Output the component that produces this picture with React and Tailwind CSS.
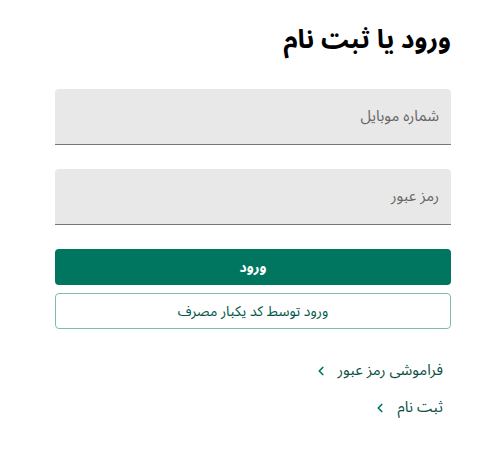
import { ChevronLeft } from 'lucide-react';

export default function App() {
  return (
    <main
      dir="rtl"
      className="min-h-screen bg-white"
      style={{ fontFamily: '"Noto Sans Arabic", "Noto Sans", "DejaVu Sans", sans-serif' }}
    >
      <div className="w-[396px] mr-[45px] pt-[20px]">
        <h1 className="text-[26px] font-bold text-black leading-[40px] mb-[29px]">
          ورود یا ثبت نام
        </h1>

        <div className="flex flex-col gap-[24px]">
          <div className="h-[56px] bg-[#e8e8e8] rounded-t-[4px] border-b border-[#767676] flex items-center px-[12px]">
            <span className="text-[15px] text-[#666]">شماره موبایل</span>
          </div>
          <div className="h-[56px] bg-[#e8e8e8] rounded-t-[4px] border-b border-[#767676] flex items-center px-[12px]">
            <span className="text-[15px] text-[#666]">رمز عبور</span>
          </div>
        </div>

        <div className="flex flex-col gap-[8px] mt-[24px]">
          <button className="h-[36px] w-full rounded-[4px] bg-[#00755f] text-white text-[14px] font-bold">
            ورود
          </button>
          <button className="h-[36px] w-full rounded-[4px] border border-[#80bbaf] text-[#00584a] text-[14px]">
            ورود توسط کد یکبار مصرف
          </button>
        </div>

        <div className="flex flex-col gap-[16px] mt-[31px] pr-[8px] text-[15px] text-[#0b4f45]">
          <a className="flex items-center gap-[10px] h-[21px]">
            فراموشی رمز عبور
            <ChevronLeft className="w-[14px] h-[14px] text-[#00755f]" strokeWidth={3} />
          </a>
          <a className="flex items-center gap-[10px] h-[21px]">
            ثبت نام
            <ChevronLeft className="w-[14px] h-[14px] text-[#00755f]" strokeWidth={3} />
          </a>
        </div>
      </div>
    </main>
  );
}
